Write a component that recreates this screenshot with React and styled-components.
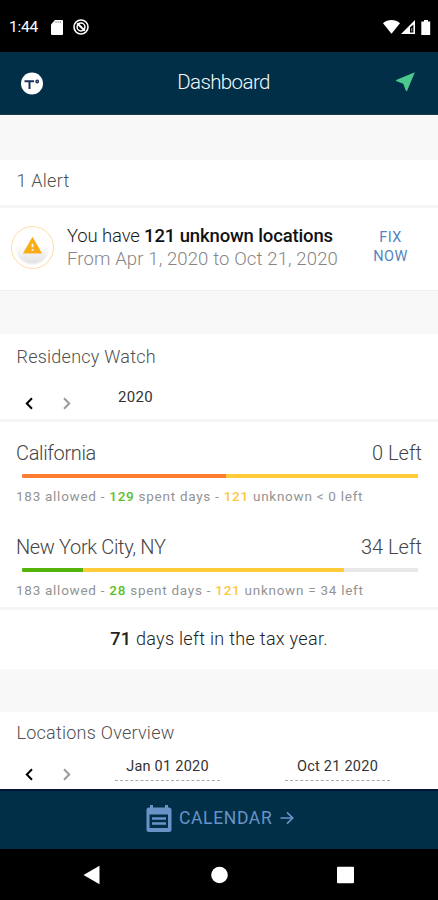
import React from 'react';
import styled, { createGlobalStyle } from 'styled-components';
import { MdNearMe, MdWarning } from 'react-icons/md';

const GlobalStyle = createGlobalStyle`
  * {
    box-sizing: border-box;
  }

  body {
    margin: 0;
    background: #fff;
    font-family: Roboto, "Liberation Sans", sans-serif;
  }
`;

const Screen = styled.div`
  width: 438px;
  height: 900px;
  display: flex;
  flex-direction: column;
  overflow: hidden;
  background: #fff;
`;

// Status bar
const StatusBar = styled.div`
  height: 52px;
  flex: none;
  display: flex;
  align-items: center;
  padding: 2px 7px 0 9px;
  background: #000;
  color: #fff;
`;

const Clock = styled.span`
  width: 42px;
  font-size: 15.5px;
  font-weight: 400;
  letter-spacing: -0.2px;
`;

const StatusIcons = styled.div`
  display: flex;
  align-items: center;
  gap: ${(props) => props.$gap}px;
`;

const Spacer = styled.div`
  flex: 1;
`;

// Header
const Header = styled.header`
  height: 63px;
  flex: none;
  display: grid;
  grid-template-columns: 60px 1fr 50px;
  align-items: center;
  padding: 0 11px 2px 10px;
  background: #002f47;
  border-bottom: 1px solid #1c3a4c;
`;

const HeaderTitle = styled.h1`
  margin: 0;
  text-align: center;
  font-size: 20.5px;
  font-weight: 300;
  letter-spacing: -0.6px;
  color: #f4f8fa;
`;

const LogoSlot = styled.div`
  display: flex;
  padding: 3px 0 0 11px;
`;

const LocateButton = styled.div`
  display: flex;
  justify-content: flex-end;
  padding: 0 9px 2px 0;
  color: #4bc98c;
`;

// Content
const Content = styled.main`
  flex: 1;
  min-height: 0;
  overflow: hidden;
`;

const Gap = styled.div`
  height: ${(props) => props.$height}px;
  background: #f8f8f8;
`;

const SectionTitle = styled.h2`
  margin: 0;
  height: ${(props) => props.$height}px;
  padding-left: 16.5px;
  line-height: ${(props) => props.$line}px;
  font-size: 18px;
  font-weight: 300;
  letter-spacing: 0.24px;
  color: #505050;
`;

const Divider = styled.div`
  height: 3px;
  background: #f5f5f5;
`;

// Alert
const AlertRow = styled.div`
  height: 83px;
  display: flex;
  align-items: center;
  padding: 0 0 3px 11px;
  border-bottom: 1px solid #f0f0f0;
`;

const AlertBadge = styled.div`
  width: 43px;
  height: 43px;
  flex: none;
  display: flex;
  align-items: center;
  justify-content: center;
  padding-bottom: 5px;
  margin-right: 13px;
  border: 1px solid #ffdca6;
  border-radius: 50%;
  background:
    radial-gradient(circle at 50% 50%, transparent 15px, #fff 18px),
    linear-gradient(#fff 45%, #e2e2e2 88%);
  color: #fbad18;
`;

const AlertText = styled.div`
  width: 290px;
  flex: none;
  white-space: nowrap;
  line-height: 23px;
`;

const AlertLine = styled.div`
  font-size: 18.5px;
  font-weight: 300;
  letter-spacing: ${(props) => props.$spacing}px;
  color: ${(props) => (props.$muted ? '#858585' : '#1c1c1c')};

  b {
    font-weight: 500;
    color: #111;
  }
`;

const FixButton = styled.div`
  width: 67px;
  text-align: center;
  font-size: 14.5px;
  line-height: 18.5px;
  letter-spacing: 0.5px;
  color: #5585bf;
`;

// Period navigation
const PeriodRow = styled.div`
  height: 40px;
  display: flex;
  padding-left: 25px;
`;

const Arrows = styled.div`
  width: ${(props) => props.$width}px;
  flex: none;
  display: flex;
  gap: 30px;
  padding-top: ${(props) => props.$top}px;
`;

const Year = styled.span`
  padding-top: 8px;
  font-size: 15px;
  line-height: 20px;
  letter-spacing: 0.3px;
  color: #333;
`;

const DateField = styled.div`
  width: 105px;
  height: 26px;
  flex: none;
  margin-right: 65px;
  border-bottom: 1px dashed #aaa;
  text-align: center;
  font-size: 14.5px;
  line-height: 23px;
  letter-spacing: 0.25px;
  white-space: nowrap;
  color: #333;
`;

// Residency
const Residency = styled.div`
  height: ${(props) => props.$height}px;
  padding: 19px 16px 0;
`;

const ResidencyHead = styled.div`
  display: flex;
  justify-content: space-between;
  font-size: 20px;
  line-height: 24px;
  font-weight: 300;
  color: #444;
`;

const Place = styled.span`
  letter-spacing: -0.35px;
`;

const Bar = styled.div`
  height: 4px;
  margin: 9px 4px 0 6px;
  display: flex;
  border-radius: 1px;
  background: #e8e8e8;
  overflow: hidden;
`;

const BarPart = styled.div`
  background: ${(props) => props.$color};
`;

const Caption = styled.div`
  margin-top: 9px;
  font-size: 13.5px;
  line-height: 18px;
  letter-spacing: 0.73px;
  white-space: nowrap;
  color: #939393;
`;

const Count = styled.span`
  font-weight: 500;
  color: ${(props) => props.$color};
`;

const DaysLeft = styled.div`
  height: 59px;
  line-height: 57px;
  text-align: center;
  font-size: 18px;
  font-weight: 300;
  letter-spacing: 0.3px;
  color: #222;

  b {
    font-weight: 500;
  }
`;

// Bottom bars
const CalendarBar = styled.div`
  height: 60px;
  flex: none;
  display: flex;
  align-items: center;
  padding: 0 0 4px 146px;
  border-top: 2px solid #001637;
  background: #002f47;
  color: #6993c6;
`;

const CalendarLabel = styled.span`
  width: 108px;
  padding-left: 7px;
  font-size: 17.5px;
  letter-spacing: 0.65px;
  white-space: nowrap;
`;

const NavBar = styled.div`
  height: 51px;
  flex: none;
  display: flex;
  align-items: center;
  padding-left: 83px;
  background: #000;
`;

const residencies = [
  {
    place: 'California',
    left: 0,
    sign: '<',
    spent: 129,
    height: 94,
    parts: [
      { color: '#fb7e32', width: 204 },
      { color: '#ffcb39', width: 192 },
    ],
  },
  {
    place: 'New York City, NY',
    left: 34,
    sign: '=',
    spent: 28,
    height: 91,
    parts: [
      { color: '#55b40b', width: 61 },
      { color: '#ffcb39', width: 261 },
    ],
  },
];

const Chevron = ({ flip, color }) => (
  <svg width="8" height="13" viewBox="0 0 8 13">
    <path
      d={flip ? 'M1 1.2l5.2 5.3L1 11.8' : 'M7 1.2L1.8 6.5 7 11.8'}
      fill="none"
      stroke={color}
      strokeWidth="2"
    />
  </svg>
);

const PeriodArrows = ({ width, top }) => (
  <Arrows $width={width} $top={top}>
    <Chevron color="#000" />
    <Chevron flip color="#9a9a9a" />
  </Arrows>
);

const Logo = () => (
  <svg width="22" height="23" viewBox="0 0 22 23">
    <circle cx="11" cy="11.5" r="11" fill="#fff" />
    <path d="M3.5 9.3H13M8.5 9.3V17" fill="none" stroke="#18305a" strokeWidth="2" />
    <circle cx="16.2" cy="9.5" r="1.3" fill="#9aa6bb" stroke="#18305a" strokeWidth="1.3" />
  </svg>
);

const App = () => {
  return (
    <>
      <GlobalStyle />
      <Screen>
        <StatusBar>
          <Clock>1:44</Clock>
          <StatusIcons $gap={10}>
            <svg width="12" height="15" viewBox="0 0 12 15">
              <path d="M4 0h7a1 1 0 0 1 1 1v13a1 1 0 0 1-1 1H1a1 1 0 0 1-1-1V4.5z" fill="#fff" />
              <path d="M5 1.2V3M7.2 1.2V3M9.4 1.2V3" stroke="#777" strokeWidth=".8" />
            </svg>
            <svg width="16" height="16" viewBox="0 0 16 16" fill="none" stroke="#fff">
              <circle cx="8" cy="8" r="7" strokeWidth="1.6" />
              <circle cx="8" cy="8" r="3.9" strokeWidth="1.5" />
              <path d="M4.2 4.2l7.6 7.6" strokeWidth="2" />
            </svg>
          </StatusIcons>
          <Spacer />
          <StatusIcons $gap={1}>
            <svg width="17" height="14" viewBox="0 0 17 14">
              <path d="M0 3.2C4.8-1 12.2-1 17 3.2L8.5 13.8z" fill="#fff" />
            </svg>
            <svg width="14" height="14" viewBox="0 0 14 14">
              <path d="M14 0v14H0z" fill="#fff" />
              <path d="M12.4 4.5v8H9V7.5z" fill="#000" />
              <path d="M10.8 8v3.5" stroke="#aaa" strokeWidth="1" />
            </svg>
            <svg width="15" height="15" viewBox="0 0 15 15">
              <path d="M8 0h4v1.5h2.2V15H5.3V1.5H8z" fill="#fff" />
            </svg>
          </StatusIcons>
        </StatusBar>

        <Header>
          <LogoSlot>
            <Logo />
          </LogoSlot>
          <HeaderTitle>Dashboard</HeaderTitle>
          <LocateButton>
            <MdNearMe size={25} />
          </LocateButton>
        </Header>

        <Content>
          <Gap $height={45} />
          <SectionTitle $height={45} $line={42}>
            1 Alert
          </SectionTitle>
          <Divider />
          <AlertRow>
            <AlertBadge>
              <MdWarning size={21} />
            </AlertBadge>
            <AlertText>
              <AlertLine $spacing={-0.14}>
                You have <b>121 unknown locations</b>
              </AlertLine>
              <AlertLine $muted $spacing={0.13}>
                From Apr 1, 2020 to Oct 21, 2020
              </AlertLine>
            </AlertText>
            <FixButton>
              FIX
              <br />
              NOW
            </FixButton>
          </AlertRow>
          <Gap $height={43} />

          {/* Residency Watch */}
          <SectionTitle $height={45} $line={45}>
            Residency Watch
          </SectionTitle>
          <PeriodRow>
            <PeriodArrows width={93} top={18} />
            <Year>2020</Year>
          </PeriodRow>
          <Divider />
          {residencies.map((item) => (
            <Residency key={item.place} $height={item.height}>
              <ResidencyHead>
                <Place>{item.place}</Place>
                <span>{item.left} Left</span>
              </ResidencyHead>
              <Bar>
                {item.parts.map((part) => (
                  <BarPart key={part.color} $color={part.color} style={{ width: part.width }} />
                ))}
              </Bar>
              <Caption>
                183 allowed - <Count $color="#5cbf2a">{item.spent}</Count> spent days -{' '}
                <Count $color="#fdc840">121</Count> unknown {item.sign} {item.left} left
              </Caption>
            </Residency>
          ))}
          <Divider />
          <DaysLeft>
            <b>71</b> days left in the tax year.
          </DaysLeft>
          <Gap $height={43} />

          {/* Locations Overview */}
          <SectionTitle $height={43} $line={42}>
            Locations Overview
          </SectionTitle>
          <PeriodRow>
            <PeriodArrows width={90} top={13} />
            <DateField>Jan 01 2020</DateField>
            <DateField>Oct 21 2020</DateField>
          </PeriodRow>
        </Content>

        <CalendarBar>
          <svg width="26" height="27" viewBox="0 0 26 27">
            <path
              d="M4 0h3v2.5h12V0h3v2.5h1A2.5 2.5 0 0 1 25.5 5v19.5A2.5 2.5 0 0 1 23 27H3A2.5 2.5 0 0 1 .5 24.5V5A2.5 2.5 0 0 1 3 2.5h1z"
              fill="#6993c6"
            />
            <path d="M3.5 9.5h18.500v13.500H3.500z" fill="#002f47" />
            <path d="M6 13.500h14M6 18.500h14" stroke="#6993c6" strokeWidth="2.400" />
          </svg>
          <CalendarLabel>CALENDAR</CalendarLabel>
          <svg width="14" height="14" viewBox="0 0 14 14">
            <path d="M.5 7h12M7 1.3L12.7 7 7 12.7" fill="none" stroke="#6993c6" strokeWidth="1.7" />
          </svg>
        </CalendarBar>

        <NavBar>
          <svg width="271" height="20" viewBox="0 0 271 20" fill="#fff">
            <path d="M.5 10L16.5.8v18.4z" />
            <circle cx="136.5" cy="10" r="8.3" />
            <rect x="254" y="1.7" width="17" height="16.6" rx="1" />
          </svg>
        </NavBar>
      </Screen>
    </>
  );
};

export default App;
